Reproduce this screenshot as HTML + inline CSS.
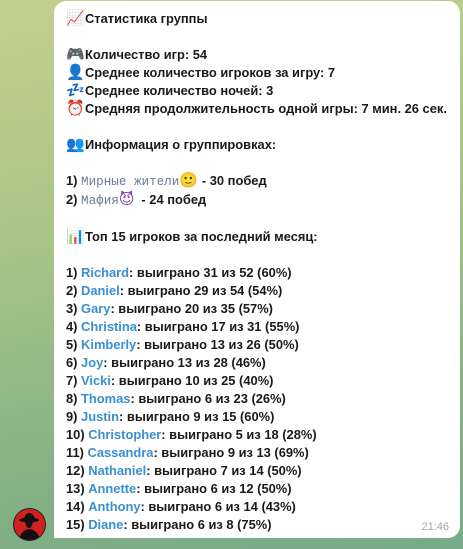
<!DOCTYPE html>
<html><head><meta charset="utf-8"><style>
html,body{margin:0;padding:0;width:463px;height:549px;overflow:hidden}
body{background:linear-gradient(170deg,#c3cf8e 0%,#a8c486 40%,#86b285 75%,#78a989 100%);font-family:"Liberation Sans","DejaVu Sans",sans-serif;position:relative}
.bub{position:absolute;left:54px;top:1px;width:406px;height:537px;background:#fff;border-radius:12px 12px 12px 0}
.txt{position:absolute;left:66px;top:10px;font-size:12.9px;font-weight:bold;line-height:18px;color:#1a1a1a;white-space:pre}
.n{color:#3a8fd0}
.m{font-family:"Liberation Mono",monospace;font-weight:normal;color:#6a7a9a;font-size:12.6px}
.e{display:inline-block;width:19px;text-align:left;font-weight:normal;font-size:15px;line-height:14px}
.time{position:absolute;right:14px;top:521px;font-size:11px;color:#a0a8a0}
.av{position:absolute;left:13px;top:508px;width:31px;height:31px;border-radius:50%;background:#d1211c;border:1px solid #222;overflow:hidden}
</style></head><body>
<div class="bub"></div>
<div class="txt"><span class="e" style="color:#d33">📈</span>Статистика группы

<span class="e">🎮</span>Количество игр: 54
<span class="e" style="color:#4b7bb0">👤</span>Среднее количество игроков за игру: 7
<span class="e" style="color:#2a6ad0">💤</span>Среднее количество ночей: 3
<span class="e" style="color:#d22">⏰</span>Средняя продолжительность одной игры: 7 мин. 26 сек.

<span class="e" style="color:#8aa">👥</span>Информация о группировках:

1) <span class="m">Мирные жители</span><span class="e">🙂</span> - 30 побед
2) <span class="m">Мафия</span><span class="e" style="color:#8040b0">😈</span> - 24 побед

<span class="e">📊</span>Топ 15 игроков за последний месяц:

1) <span class="n">Richard</span>: выиграно 31 из 52 (60%)
2) <span class="n">Daniel</span>: выиграно 29 из 54 (54%)
3) <span class="n">Gary</span>: выиграно 20 из 35 (57%)
4) <span class="n">Christina</span>: выиграно 17 из 31 (55%)
5) <span class="n">Kimberly</span>: выиграно 13 из 26 (50%)
6) <span class="n">Joy</span>: выиграно 13 из 28 (46%)
7) <span class="n">Vicki</span>: выиграно 10 из 25 (40%)
8) <span class="n">Thomas</span>: выиграно 6 из 23 (26%)
9) <span class="n">Justin</span>: выиграно 9 из 15 (60%)
10) <span class="n">Christopher</span>: выиграно 5 из 18 (28%)
11) <span class="n">Cassandra</span>: выиграно 9 из 13 (69%)
12) <span class="n">Nathaniel</span>: выиграно 7 из 14 (50%)
13) <span class="n">Annette</span>: выиграно 6 из 12 (50%)
14) <span class="n">Anthony</span>: выиграно 6 из 14 (43%)
15) <span class="n">Diane</span>: выиграно 6 из 8 (75%)</div>
<div class="time">21:46</div>
<div class="av"><svg width="31" height="31" viewBox="0 0 31 31"><ellipse cx="15" cy="11" rx="10" ry="2.5" fill="#111"/><path d="M10 11 Q11 4 15 4 Q20 4 21 11Z" fill="#111"/><path d="M11 12 Q12 19 15 19 Q18 19 19 12Z" fill="#111"/><path d="M5 31 Q7 21 15 20 Q24 21 26 31Z" fill="#111"/></svg></div>
</body></html>
